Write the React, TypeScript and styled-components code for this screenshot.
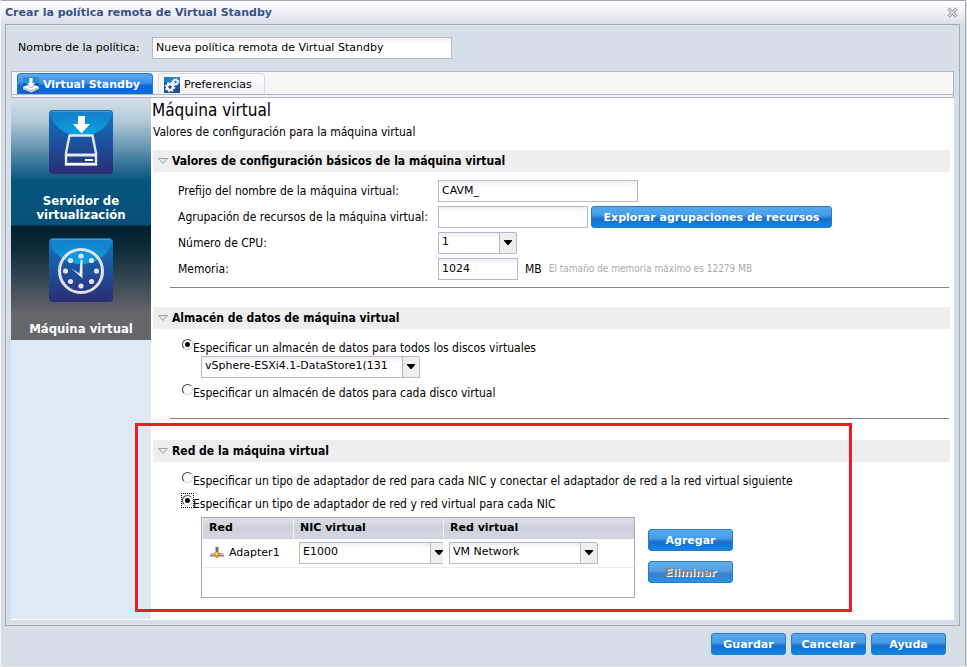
import React, { useState } from "react";
import styled, { createGlobalStyle, css } from "styled-components";

const wide = `"DejaVu Sans", Verdana, sans-serif`;
const narrow = `"DejaVu Sans Condensed", Tahoma, "Noto Sans", sans-serif`;

const Global = createGlobalStyle`
  *, *::before, *::after { box-sizing: border-box; }
  body { margin: 0; background: #e4e6ea; font: 11px/14px ${wide}; color: #000; }
  button, input, select { font: inherit; color: inherit; margin: 0; }
  h1, h2, p { margin: 0; }
`;

const Dialog = styled.div`
  display: flex;
  flex-direction: column;
  min-height: calc(100vh - 1px);
  margin-right: 1px;
  background: #d6dee7;
  border: 1px solid #a6a6ab;
  border-left-color: #f4f6f9;
  border-bottom: 0;
  border-radius: 2px 2px 0 0;
`;

const TitleBar = styled.header`
  display: flex;
  align-items: center;
  justify-content: space-between;
  height: 23px;
  padding: 0 7px 0 4px;
  background: linear-gradient(#fff, #f3f4fa 40%, #d8dfe9);
`;

const WindowTitle = styled.h1`
  font: bold 11px/14px ${wide};
  color: #3a5284;
`;

const CloseButton = styled.button`
  display: flex;
  padding: 0;
  border: 0;
  background: none;
`;

const Frame = styled.div`
  flex: 1;
  display: flex;
  flex-direction: column;
  margin: 0 5px 0 4px;
  padding: 12px 5px 5px;
  border: 1px solid #a8a9ae;
`;

const NameRow = styled.div`
  display: flex;
  align-items: center;
  gap: 8px;
  padding: 0 0 12px 7px;
`;

const NameLabel = styled.label`
  min-width: 126px;
`;

const TextBox = styled.input<{ $w: number }>`
  width: ${(p) => p.$w}px;
  height: 22px;
  padding: 0 4px 2px 3px;
  border: 1px solid #b5b8d0;
  border-radius: 0;
  background: linear-gradient(#ececf1, #fff 5px);
  outline: 0;
`;

const TabStrip = styled.div`
  display: flex;
  align-items: flex-end;
  gap: 5px;
  height: 23px;
  padding: 0 5px;
  background: linear-gradient(#f8f8f9, #f5f5f7);
  border: 1px solid #b2b6c2;
  border-bottom: 0;
`;

const TabEdge = styled.div`
  height: 4px;
  background: #f1f2f7;
  border: 1px solid #b2b6c2;
`;

const Tab = styled.button<{ $active?: boolean }>`
  display: flex;
  align-items: center;
  gap: 4px;
  min-width: 107px;
  height: 21px;
  padding: 2px 9px 0 5px;
  border: 1px solid #dadbe2;
  border-bottom: 0;
  border-radius: 4px 4px 0 0;
  background: linear-gradient(#fbfbff, #f2f2f4);
  line-height: 14px;
  white-space: nowrap;
  ${(p) =>
    p.$active &&
    css`
      min-width: 136px;
      border-color: #2a78c4;
      background: linear-gradient(#5fa9f2, #3d90e8 45%, #0d66d6 60%, #0d6fe0);
      color: #fff;
      font-weight: bold;
    `}
`;

const Body = styled.div`
  flex: 1;
  display: flex;
  background: #fff;
`;

const SideBar = styled.nav`
  flex: 0 0 140px;
  display: flex;
  flex-direction: column;
  background: #dde9f5;
  border-bottom: 1px solid #fff;
`;

const SideItem = styled.button<{ $active?: boolean }>`
  display: flex;
  flex-direction: column;
  align-items: center;
  gap: 20px;
  padding: 12px 10px 3px;
  border: 0;
  border-bottom: 1px solid #04304a;
  background: linear-gradient(#d5dfe7, #b3cad8 18%, #075580 65%, #07517a);
  color: #fff;
  font: bold 13px/14px ${narrow};
  ${(p) =>
    p.$active &&
    css`
      border-bottom: 0;
      padding-bottom: 4px;
      background: linear-gradient(#00202f, #0c2c3b 20%, #616469 75%, #66676b 76%);
    `}
`;

const Main = styled.main`
  flex: 1;
  min-width: 0;
  padding: 2px 4px 0 1px;
  font: 12px/16px ${narrow};
`;

const PageTitle = styled.h2`
  font: 17px/20px ${narrow};
`;

const Lead = styled.p`
  padding: 4px 0 10px 1px;
`;

const Section = styled.section`
  position: relative;
  margin: 0 0 0 1px;
`;

const SectionHead = styled.h2`
  display: flex;
  align-items: center;
  gap: 4px;
  height: 22px;
  padding: 0 5px;
  background: #eee;
  font: bold 12px/16px ${narrow};
`;

const Rule = styled.hr`
  height: 1px;
  border: 0;
  margin: 0 1px 19px 17px;
  background: #848484;
`;

const Form = styled.div`
  display: grid;
  grid-template-columns: 260px 1fr;
  row-gap: 4px;
  padding: 8px 0 7px 25px;
  align-items: center;
`;

const FormLabel = styled.label`
  display: block;
`;

const Field = styled.div`
  display: flex;
  align-items: center;
  gap: 3px;
  font: 11px/14px ${wide};
`;

const Unit = styled.span`
  margin-left: 4px;
  font: 12px/16px ${narrow};
`;

const Hint = styled.span`
  margin-left: 4px;
  color: #a9a9a9;
  font: 10px/16px ${narrow};
`;

const SelectBox = styled.span<{ $w: number }>`
  position: relative;
  display: block;
  flex: none;
  width: ${(p) => p.$w}px;
  height: 22px;
`;

const SelectInput = styled.select`
  appearance: none;
  width: 100%;
  height: 22px;
  padding: 0 18px 2px 3px;
  border: 1px solid #b5b8d0;
  border-radius: 0 2px 0 0;
  background: linear-gradient(#ececf1, #fff 5px);
  font: 11px/14px ${wide};
  overflow: hidden;
  outline: 0;
`;

const SelectArrow = styled.span`
  position: absolute;
  top: 1px;
  right: 1px;
  bottom: 1px;
  width: 17px;
  display: flex;
  align-items: center;
  justify-content: center;
  padding-bottom: 2px;
  border-left: 1px solid #b5b8d0;
  background: #eee;
  pointer-events: none;
`;

const BlueButton = styled.button<{ $w: number }>`
  height: 22px;
  min-width: ${(p) => p.$w}px;
  padding: 1px 5px 0;
  border: 1px solid #2b7bbd;
  border-radius: 3px;
  background: linear-gradient(#54aaf0, #479fe8 40%, #1a6cc8 60%, #0c88ec);
  color: #fff;
  font: bold 11px/14px ${wide};
  white-space: nowrap;
  &:disabled {
    background: linear-gradient(#5caff0, #55a2e2 40%, #3a7fca 60%, #2c92ea);
    color: #858585;
    text-shadow: 1px 1px 0 #fff;
  }
`;

const Choice = styled.label`
  display: flex;
  align-items: flex-start;
  height: 18px;
`;

const ChoiceText = styled.span`
  padding-top: 2px;
`;

const Radio = styled.input`
  appearance: none;
  flex: none;
  width: 11px;
  height: 11px;
  margin: 1px 0 0;
  border: 1px solid #d4d4d4;
  border-top-color: #444;
  border-left-color: #444;
  border-radius: 50%;
  background: #fff;
  &:checked {
    background: radial-gradient(circle, #000 2px, #fff 3px);
  }
`;

const FocusRing = styled.span<{ $on?: boolean }>`
  display: flex;
  flex: none;
  height: 13px;
  outline: ${(p) => (p.$on ? "1px dotted #000" : "0")};
`;

const StoreSection = styled(Section)`
  margin-bottom: 21px;
`;

const StoreBody = styled.div`
  padding: 9px 0 17px 29px;
`;

const StorePick = styled.div`
  padding: 0 0 5px 19px;
`;

const NetBody = styled.div`
  display: flex;
  flex-direction: column;
  gap: 5px;
  padding: 9px 0 0 29px;
`;

const NetRow = styled.div`
  display: flex;
  align-items: flex-start;
  gap: 13px;
  padding-left: 19px;
`;

const ButtonColumn = styled.div`
  display: flex;
  flex-direction: column;
  gap: 10px;
  padding-top: 12px;
`;

const GridFrame = styled.div`
  flex: 0 0 434px;
  min-height: 81px;
  border: 1px solid #a6aab8;
`;

const NicTable = styled.table`
  width: 100%;
  table-layout: fixed;
  border-collapse: separate;
  border-spacing: 0;
  font: 11px/14px ${wide};
`;

const HeadCell = styled.th<{ $w?: number }>`
  width: ${(p) => (p.$w ? `${p.$w}px` : "auto")};
  height: 21px;
  padding: 0 0 0 6px;
  text-align: left;
  font-weight: bold;
  background: linear-gradient(#dde0e7, #ccd1dc 50%, #d2d6e0);
  border-left: 1px solid #eceef2;
  border-bottom: 1px solid #d0d2da;
`;

const Cell = styled.td`
  height: 29px;
  padding: 0 0 0 6px;
  border-bottom: 1px solid #ededed;
  overflow: hidden;
`;

const AdapterName = styled.span`
  display: flex;
  align-items: center;
  gap: 5px;
  padding-left: 2px;
`;

const Highlight = styled.div`
  position: absolute;
  inset: -17px 98px -14px -18px;
  border: 3px solid #ed1c24;
  pointer-events: none;
`;

const Footer = styled.footer`
  display: flex;
  justify-content: flex-end;
  gap: 5px;
  padding: 7px 19px 11px;
`;

function CloseIcon() {
  return (
    <svg width="11" height="11" viewBox="0 0 11 11" aria-hidden="true">
      <path d="M1.500 1.500l8 8M9.500 1.500l-8 8" stroke="#777" strokeWidth="3" />
      <path d="M1.500 1.500l8 8M9.500 1.500l-8 8" stroke="#f4f4f8" strokeWidth="1.400" />
    </svg>
  );
}

function TabDriveIcon() {
  return (
    <svg width="16" height="16" viewBox="0 0 16 16" aria-hidden="true">
      <rect width="16" height="16" fill="#1b5fa8" />
      <rect width="16" height="6" fill="#2b8fce" />
      <path d="M0 10l5-2h6l5 2v2L8.500 15.500 0 12.500z" fill="#b9c8d8" />
      <path d="M0 10l8.500 3 7.500-3-5-2H5z" fill="#fff" />
      <path d="M6.500 1h3v5H12l-4 4-4-4h2.500z" fill="#fff" />
      <path d="M4 8l4 3 4-3" fill="none" stroke="#8ba9c8" strokeWidth="0.800" />
    </svg>
  );
}

function TabGearIcon() {
  return (
    <svg width="16" height="16" viewBox="0 0 16 16" aria-hidden="true">
      <rect width="16" height="16" fill="#1c4f9a" />
      <path d="M0 0h16v5q-8 5-16 0z" fill="#1f7fc4" />
      <circle cx="6" cy="10" r="2.900" fill="none" stroke="#f4f6fa" strokeWidth="2.400" />
      <circle cx="6" cy="10" r="4.500" fill="none" stroke="#f4f6fa" strokeWidth="1.500" strokeDasharray="1.770" />
      <circle cx="11.500" cy="5" r="2.100" fill="none" stroke="#f4f6fa" strokeWidth="1.700" />
      <circle cx="11.500" cy="5" r="3.300" fill="none" stroke="#f4f6fa" strokeWidth="1.200" strokeDasharray="1.300" />
    </svg>
  );
}

function Tile({ id, children }: { id: string; children: React.ReactNode }) {
  return (
    <svg width="64" height="64" viewBox="0 0 64 64" aria-hidden="true">
      <defs>
        <linearGradient id={`${id}-base`} x1="0" y1="0" x2="0" y2="1">
          <stop offset="0" stopColor="#1573bd" />
          <stop offset="0.500" stopColor="#1c53a0" />
          <stop offset="1" stopColor="#2c2c72" />
        </linearGradient>
        <radialGradient id={`${id}-gloss`} cx="0.500" cy="1" r="0.900">
          <stop offset="0" stopColor="#05a8e4" />
          <stop offset="1" stopColor="#1482cc" />
        </radialGradient>
      </defs>
      <rect width="64" height="64" rx="4" fill={`url(#${id}-base)`} />
      <path d="M1 2h62v3C60 16 48 26 32 26S4 16 1 5z" fill={`url(#${id}-gloss)`} />
      <path d="M3 1.500h58" stroke="#3c9bd9" />
      {children}
    </svg>
  );
}

function ServerIcon() {
  return (
    <Tile id="server">
      <path d="M29 6h7v8h5l-8.500 9.500L24 14h5z" fill="#fff" />
      <path d="M20.500 25.500h23L47 43v11H17V43z" fill="none" stroke="#e6e6ea" strokeWidth="2.400" />
      <path d="M17 45h30" stroke="#e6e6ea" strokeWidth="3" />
      <path d="M16 54.500h32" stroke="#fff" strokeWidth="2" />
      <path d="M36 50h8" stroke="#fff" strokeWidth="2" />
    </Tile>
  );
}

function ClockIcon() {
  const dots: [number, number][] = [
    [32, 18], [42.500, 22.500], [47.500, 33], [42.500, 43.500],
    [32, 48], [21.500, 43.500], [16.500, 33], [21.500, 22.500],
  ];
  return (
    <Tile id="clock">
      <circle cx="32" cy="33" r="21.500" fill="none" stroke="#e2e2e8" strokeWidth="3" />
      {dots.map(([x, y]) => (
        <circle key={`${x}-${y}`} cx={x} cy={y} r="2.600" fill="#e2e2e8" />
      ))}
      <path d="M31.500 22h2v18.500L22.500 30.500l8 5z" fill="#e8e8ee" />
    </Tile>
  );
}

function AdapterIcon() {
  return (
    <svg width="14" height="12" viewBox="0 0 14 12" aria-hidden="true">
      <path d="M5.500 0h3v6h-3z" fill="#66727f" />
      <path d="M0 7l3-1h8l3 1v2.500H9.500L7 11 4.500 9.500H0z" fill="#7d838c" />
      <path d="M0 6.500h4V8H0zM10 6.500h4V8h-4z" fill="#c8cdd4" />
      <circle cx="7" cy="7.500" r="2.800" fill="#d99a1c" />
      <circle cx="6.500" cy="6.700" r="1.200" fill="#ffe27a" />
    </svg>
  );
}

function Disclosure() {
  return (
    <svg width="10" height="7" viewBox="0 0 10 7" aria-hidden="true">
      <path d="M0.500 0.500h9L5 5.500z" fill="#e6e6e6" stroke="#a2a2a2" />
    </svg>
  );
}

function Select({ w, value, id, label }: { w: number; value: string; id?: string; label?: string }) {
  return (
    <SelectBox $w={w}>
      <SelectInput id={id} aria-label={label} defaultValue={value}>
        <option>{value}</option>
      </SelectInput>
      <SelectArrow>
        <svg width="8" height="5" viewBox="0 0 8 5" aria-hidden="true">
          <path d="M0 0h8v1L4.500 5h-1L0 1z" fill="#000" />
        </svg>
      </SelectArrow>
    </SelectBox>
  );
}

function Option(p: { name: string; text: string; on: boolean; focused?: boolean; pick: () => void }) {
  return (
    <Choice>
      <FocusRing $on={p.focused}>
        <Radio type="radio" name={p.name} checked={p.on} onChange={p.pick} />
      </FocusRing>
      <ChoiceText>{p.text}</ChoiceText>
    </Choice>
  );
}

export default function App() {
  const [store, setStore] = useState(0);
  const [net, setNet] = useState(1);

  return (
    <>
      <Global />
      <Dialog role="dialog" aria-labelledby="window-title">
        <TitleBar>
          <WindowTitle id="window-title">Crear la política remota de Virtual Standby</WindowTitle>
          <CloseButton aria-label="Cerrar"><CloseIcon /></CloseButton>
        </TitleBar>

        <Frame>
          <NameRow>
            <NameLabel htmlFor="policy">Nombre de la política:</NameLabel>
            <TextBox id="policy" $w={300} defaultValue="Nueva política remota de Virtual Standby" />
          </NameRow>

          <TabStrip role="tablist">
            <Tab role="tab" aria-selected="true" $active><TabDriveIcon />Virtual Standby</Tab>
            <Tab role="tab" aria-selected="false"><TabGearIcon />Preferencias</Tab>
          </TabStrip>
          <TabEdge />

          <Body>
            <SideBar>
              <SideItem><ServerIcon />Servidor de virtualización</SideItem>
              <SideItem $active><ClockIcon />Máquina virtual</SideItem>
            </SideBar>

            <Main>
              <PageTitle>Máquina virtual</PageTitle>
              <Lead>Valores de configuración para la máquina virtual</Lead>

              <Section>
                <SectionHead><Disclosure />Valores de configuración básicos de la máquina virtual</SectionHead>
                <Form>
                  <FormLabel htmlFor="prefix">Prefijo del nombre de la máquina virtual:</FormLabel>
                  <Field><TextBox id="prefix" $w={200} defaultValue="CAVM_" /></Field>
                  <FormLabel htmlFor="pool">Agrupación de recursos de la máquina virtual:</FormLabel>
                  <Field>
                    <TextBox id="pool" $w={150} />
                    <BlueButton $w={241}>Explorar agrupaciones de recursos</BlueButton>
                  </Field>
                  <FormLabel htmlFor="cpu">Número de CPU:</FormLabel>
                  <Field><Select id="cpu" w={79} value="1" /></Field>
                  <FormLabel htmlFor="memory">Memoria:</FormLabel>
                  <Field>
                    <TextBox id="memory" $w={80} defaultValue="1024" />
                    <Unit>MB</Unit>
                    <Hint>El tamaño de memoria máximo es 12279 MB</Hint>
                  </Field>
                </Form>
                <Rule />
              </Section>

              <StoreSection>
                <SectionHead><Disclosure />Almacén de datos de máquina virtual</SectionHead>
                <StoreBody>
                  <Option name="store" text="Especificar un almacén de datos para todos los discos virtuales" on={store === 0} pick={() => setStore(0)} />
                  <StorePick><Select w={219} value="vSphere-ESXi4.1-DataStore1(131" label="Almacén de datos" /></StorePick>
                  <Option name="store" text="Especificar un almacén de datos para cada disco virtual" on={store === 1} pick={() => setStore(1)} />
                </StoreBody>
                <Rule />
              </StoreSection>

              <Section>
                <SectionHead><Disclosure />Red de la máquina virtual</SectionHead>
                <NetBody>
                  <Option name="net" text="Especificar un tipo de adaptador de red para cada NIC y conectar el adaptador de red a la red virtual siguiente" on={net === 0} pick={() => setNet(0)} />
                  <Option name="net" text="Especificar un tipo de adaptador de red y red virtual para cada NIC" on={net === 1} focused={net === 1} pick={() => setNet(1)} />
                  <NetRow>
                    <GridFrame>
                      <NicTable>
                        <thead>
                          <tr>
                            <HeadCell $w={91}>Red</HeadCell>
                            <HeadCell $w={150}>NIC virtual</HeadCell>
                            <HeadCell>Red virtual</HeadCell>
                          </tr>
                        </thead>
                        <tbody>
                          <tr>
                            <Cell><AdapterName><AdapterIcon />Adapter1</AdapterName></Cell>
                            <Cell><Select w={149} value="E1000" label="NIC virtual" /></Cell>
                            <Cell><Select w={149} value="VM Network" label="Red virtual" /></Cell>
                          </tr>
                        </tbody>
                      </NicTable>
                    </GridFrame>
                    <ButtonColumn>
                      <BlueButton $w={85}>Agregar</BlueButton>
                      <BlueButton $w={85} disabled>Eliminar</BlueButton>
                    </ButtonColumn>
                  </NetRow>
                </NetBody>
                <Highlight />
              </Section>
            </Main>
          </Body>
        </Frame>

        <Footer>
          <BlueButton $w={75}>Guardar</BlueButton>
          <BlueButton $w={75}>Cancelar</BlueButton>
          <BlueButton $w={75}>Ayuda</BlueButton>
        </Footer>
      </Dialog>
    </>
  );
}
